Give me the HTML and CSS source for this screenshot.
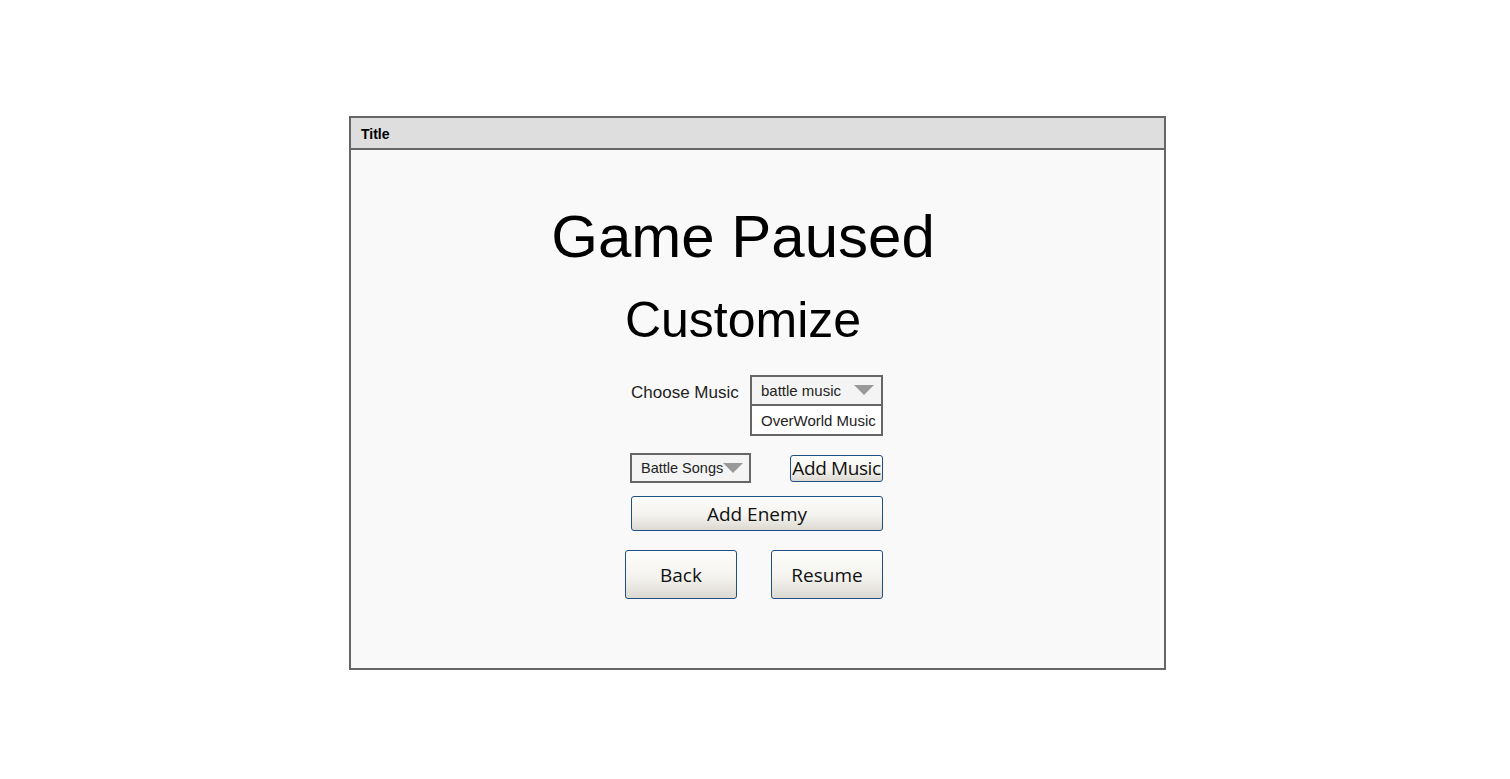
FILE: index.html
```html
<!DOCTYPE html>
<html>
<head>
<meta charset="utf-8">
<link rel="stylesheet" href="styles.css">
</head>
<body>
<div class="window">
  <div class="titlebar">Title</div>
  <div class="content">
    <div class="headings">
      <h1 class="h-main">Game Paused</h1>
      <h2 class="h-sub">Customize</h2>
    </div>
    <div class="controls">
      <div class="row row-music">
        <span class="label">Choose Music</span>
        <div class="listbox">
          <div class="item item-selected">
            <span>battle music</span>
            <svg class="arrow" width="20" height="10" viewBox="0 0 20 10"><polygon points="0,0 20,0 10,10" fill="#999"/></svg>
          </div>
          <div class="item">OverWorld Music</div>
        </div>
      </div>
      <div class="row row-songs">
        <div class="select">
          <span>Battle Songs</span>
          <svg class="arrow" width="20" height="10" viewBox="0 0 20 10"><polygon points="0,0 20,0 10,10" fill="#999"/></svg>
        </div>
        <button class="btn btn-small">Add Music</button>
      </div>
      <button class="btn btn-wide">Add Enemy</button>
      <div class="row row-nav">
        <button class="btn btn-big">Back</button>
        <button class="btn btn-big">Resume</button>
      </div>
    </div>
  </div>
</div>
</body>
</html>
```
FILE: styles.css
```css
html, body {
  margin: 0;
  padding: 0;
  background: #ffffff;
}
body {
  padding-top: 116px;
  padding-left: 349px;
  font-family: "Liberation Sans", Arial, sans-serif;
}
.window {
  width: 813px;
  height: 550px;
  border: 2px solid #666666;
  background: #f9f9f9;
  display: flex;
  flex-direction: column;
}
.titlebar {
  height: 30px;
  border-bottom: 2px solid #666666;
  background: #dedede;
  font-size: 14px;
  font-weight: bold;
  line-height: 32px;
  padding-left: 10px;
  color: #000;
}
.content {
  flex: 1;
  padding-top: 57px;
}
.headings {
  width: 400px;
  margin-left: 192px;
  text-align: center;
  color: #000;
}
.h-main {
  margin: 0;
  font-size: 60px;
  line-height: 60px;
  font-weight: normal;
}
.h-sub {
  margin: 28px 0 0 0;
  font-size: 50px;
  line-height: 50px;
  font-weight: normal;
}
.controls {
  margin-top: 30px;
  margin-left: 274px;
  width: 258px;
  display: flex;
  flex-direction: column;
}
.row {
  display: flex;
  justify-content: space-between;
}
.row-music {
  padding-left: 6px;
  align-items: flex-start;
}
.label {
  font-size: 17px;
  color: #222;
  line-height: 30px;
  margin-top: 3px;
}
.listbox {
  width: 129px;
  border: 2px solid #666666;
  background: #ffffff;
}
.item {
  height: 28px;
  line-height: 29px;
  padding-left: 9px;
  font-size: 15px;
  color: #222;
  display: flex;
  align-items: center;
  justify-content: space-between;
  white-space: nowrap;
}
.item-selected {
  height: 27px;
  background: #f4f4f4;
  border-bottom: 2px solid #666666;
  padding-right: 7px;
}
.arrow {
  display: block;
}
.item-selected .arrow {
  margin-top: -2px;
}
.row-songs {
  margin-top: 17px;
  padding-left: 5px;
  align-items: center;
}
.select {
  height: 26px;
  border: 2px solid #666666;
  background: #f4f4f4;
  display: flex;
  align-items: center;
  padding-left: 9px;
  box-sizing: content-box;
  width: 108px;
  font-size: 14.5px;
  color: #222;
  white-space: nowrap;
}
.select .arrow {
  margin-left: 0;
  margin-top: -1px;
}
.btn {
  font-family: "Open Sans", "DejaVu Sans", sans-serif;
  color: #111;
  border: 1px solid #1f4f86;
  border-radius: 3px;
  background: linear-gradient(to bottom, #fdfdfb 0%, #f4f3ef 55%, #dcd9d1 100%);
  padding: 0;
  margin: 0;
  cursor: default;
  white-space: nowrap;
  overflow: hidden;
}
.btn-small {
  width: 93px;
  height: 27px;
  font-size: 19px;
  line-height: 25px;
  letter-spacing: -0.4px;
}
.btn-wide {
  margin-top: 13px;
  margin-left: 6px;
  width: 252px;
  height: 35px;
  font-size: 19px;
}
.row-nav {
  margin-top: 19px;
}
.btn-big {
  width: 112px;
  height: 49px;
  font-size: 19px;
}
```
